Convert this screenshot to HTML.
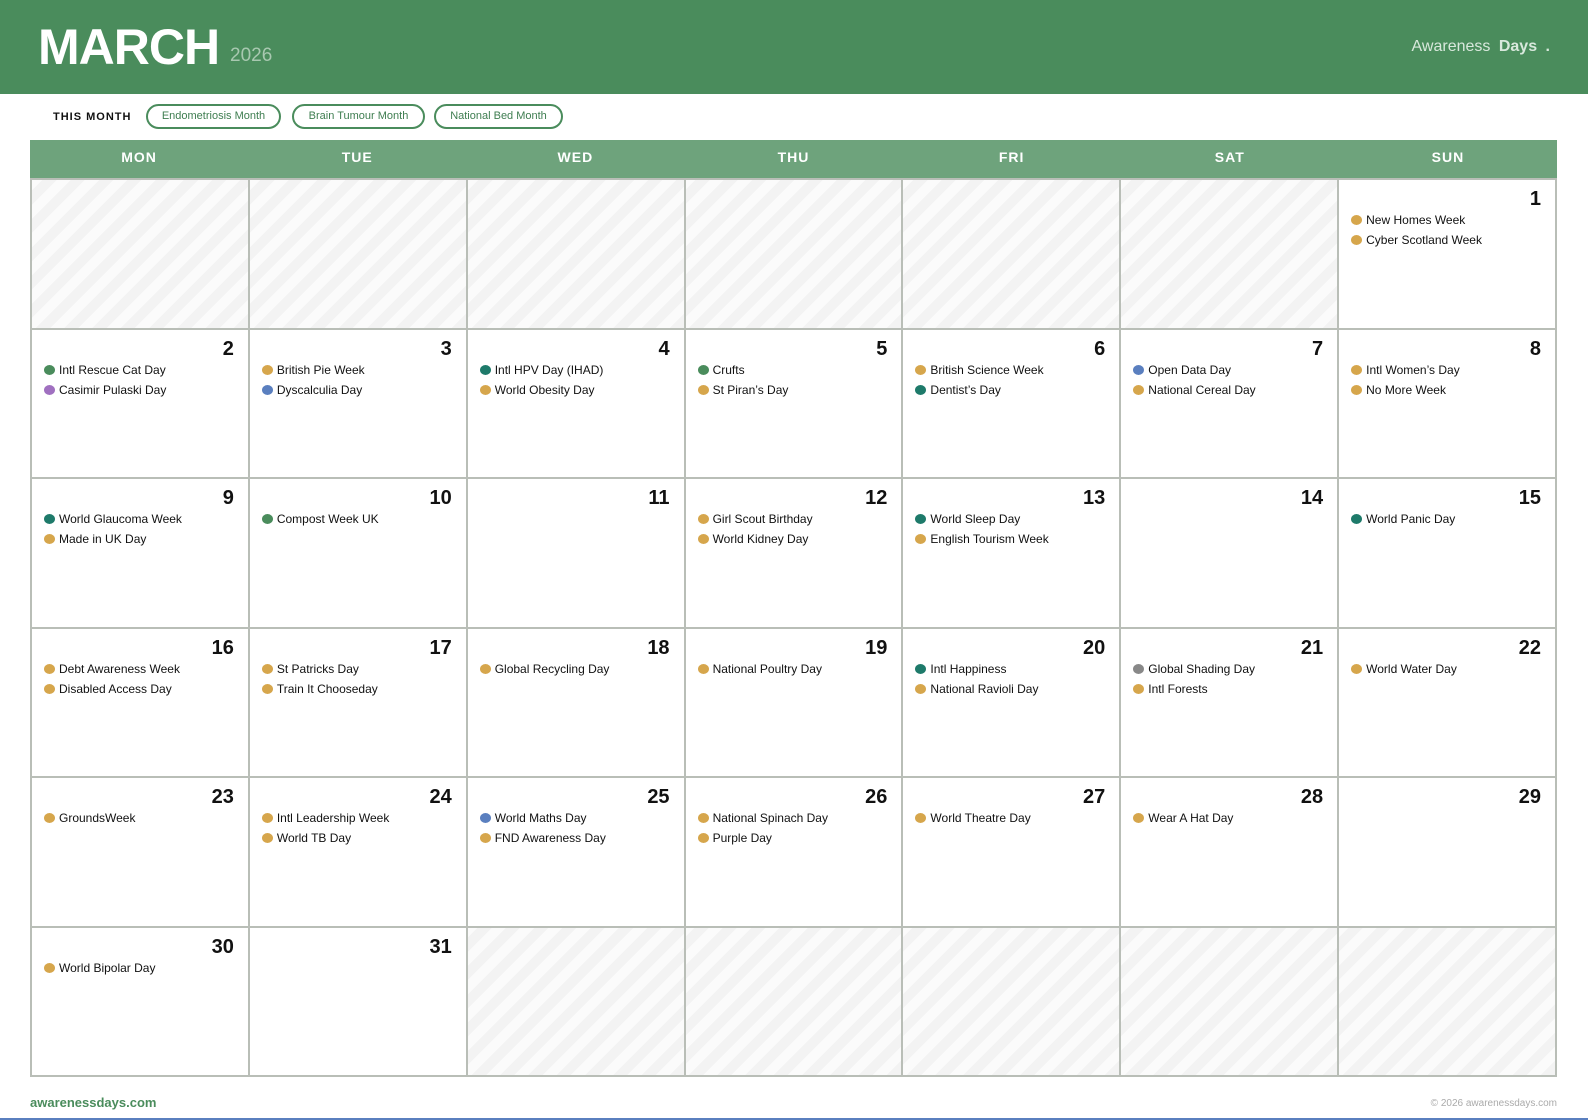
<!DOCTYPE html>
<html><head><meta charset="utf-8"><style>
*{margin:0;padding:0;box-sizing:border-box}
body{width:1588px;height:1120px;background:#fff;font-family:"Liberation Sans",Arial,sans-serif;position:relative;overflow:hidden}
.hdr{position:absolute;left:0;top:0;width:1588px;height:94px;background:#4a8c5c}
.m{position:absolute;left:38px;top:18px;font-size:50px;font-weight:bold;color:#fff;letter-spacing:-1px}
.y{position:absolute;left:230px;top:45px;font-size:19px;color:#a8c8b0}
.brand{position:absolute;right:38px;top:38px;font-size:16px;color:#d8e8dc}
.brand b{margin-left:4px}
.tm{position:absolute;left:53px;top:111px;font-size:11px;font-weight:bold;letter-spacing:1px;color:#111}
.pill{position:absolute;top:104px;height:25px;border:2px solid #4a8c5c;border-radius:13px;font-size:11px;color:#3e7d50;line-height:21px;text-align:center}
.dh{position:absolute;left:30px;top:140px;width:1527px;height:38px;background:#6ea37c;display:flex}
.dh div{flex:1;text-align:center;color:#fff;font-weight:bold;font-size:14px;line-height:34px;letter-spacing:1px}
.g{position:absolute;left:30px;top:178px;width:1527px;height:899px;background:#b9beb7;padding:2px;display:grid;grid-template-columns:repeat(7,1fr);grid-template-rows:repeat(6,1fr);gap:2px}
.c{background:#fff;position:relative}
.e{background:repeating-linear-gradient(-45deg,#f3f3f3 0 10px,#fbfbfb 10px 20px)}
.n{position:absolute;right:14px;top:8px;font-size:20px;font-weight:bold;color:#111}
.ev{position:absolute;left:12px;top:30px;font-size:12px;color:#111;line-height:20px}
.ev div{white-space:nowrap}
.d{display:inline-block;width:11px;height:10px;border-radius:50%;margin-right:4px;vertical-align:-1px}
.gn{background:#4a8c5c}.pu{background:#a070c0}.go{background:#d6a64c}.bl{background:#5a7fbf}.te{background:#1e7a6a}.gr{background:#888}
.f1{position:absolute;left:30px;top:1095px;font-size:13px;font-weight:bold;color:#4a8c5c}
.f2{position:absolute;right:31px;top:1098px;font-size:10px;color:#aaa}
.bar{position:absolute;left:0;top:1118px;width:1588px;height:2px;background:#5a7fbf}
</style></head><body>
<div class="hdr"><div class="m">MARCH</div><div class="y">2026</div><div class="brand">Awareness <b>Days</b> <b>.</b></div></div>
<div class="tm">THIS MONTH</div>
<div class="pill" style="left:146px;width:135px">Endometriosis Month</div>
<div class="pill" style="left:292px;width:133px">Brain Tumour Month</div>
<div class="pill" style="left:434px;width:129px">National Bed Month</div>
<div class="dh"><div>MON</div><div>TUE</div><div>WED</div><div>THU</div><div>FRI</div><div>SAT</div><div>SUN</div></div>
<div class="g">
<div class="c e"></div><div class="c e"></div><div class="c e"></div><div class="c e"></div><div class="c e"></div><div class="c e"></div>
<div class="c"><div class="n">1</div><div class="ev"><div><span class="d go"></span>New Homes Week</div><div><span class="d go"></span>Cyber Scotland Week</div></div></div>
<div class="c"><div class="n">2</div><div class="ev"><div><span class="d gn"></span>Intl Rescue Cat Day</div><div><span class="d pu"></span>Casimir Pulaski Day</div></div></div>
<div class="c"><div class="n">3</div><div class="ev"><div><span class="d go"></span>British Pie Week</div><div><span class="d bl"></span>Dyscalculia Day</div></div></div>
<div class="c"><div class="n">4</div><div class="ev"><div><span class="d te"></span>Intl HPV Day (IHAD)</div><div><span class="d go"></span>World Obesity Day</div></div></div>
<div class="c"><div class="n">5</div><div class="ev"><div><span class="d gn"></span>Crufts</div><div><span class="d go"></span>St Piran’s Day</div></div></div>
<div class="c"><div class="n">6</div><div class="ev"><div><span class="d go"></span>British Science Week</div><div><span class="d te"></span>Dentist’s Day</div></div></div>
<div class="c"><div class="n">7</div><div class="ev"><div><span class="d bl"></span>Open Data Day</div><div><span class="d go"></span>National Cereal Day</div></div></div>
<div class="c"><div class="n">8</div><div class="ev"><div><span class="d go"></span>Intl Women’s Day</div><div><span class="d go"></span>No More Week</div></div></div>
<div class="c"><div class="n">9</div><div class="ev"><div><span class="d te"></span>World Glaucoma Week</div><div><span class="d go"></span>Made in UK Day</div></div></div>
<div class="c"><div class="n">10</div><div class="ev"><div><span class="d gn"></span>Compost Week UK</div></div></div>
<div class="c"><div class="n">11</div></div>
<div class="c"><div class="n">12</div><div class="ev"><div><span class="d go"></span>Girl Scout Birthday</div><div><span class="d go"></span>World Kidney Day</div></div></div>
<div class="c"><div class="n">13</div><div class="ev"><div><span class="d te"></span>World Sleep Day</div><div><span class="d go"></span>English Tourism Week</div></div></div>
<div class="c"><div class="n">14</div></div>
<div class="c"><div class="n">15</div><div class="ev"><div><span class="d te"></span>World Panic Day</div></div></div>
<div class="c"><div class="n">16</div><div class="ev"><div><span class="d go"></span>Debt Awareness Week</div><div><span class="d go"></span>Disabled Access Day</div></div></div>
<div class="c"><div class="n">17</div><div class="ev"><div><span class="d go"></span>St Patricks Day</div><div><span class="d go"></span>Train It Chooseday</div></div></div>
<div class="c"><div class="n">18</div><div class="ev"><div><span class="d go"></span>Global Recycling Day</div></div></div>
<div class="c"><div class="n">19</div><div class="ev"><div><span class="d go"></span>National Poultry Day</div></div></div>
<div class="c"><div class="n">20</div><div class="ev"><div><span class="d te"></span>Intl Happiness</div><div><span class="d go"></span>National Ravioli Day</div></div></div>
<div class="c"><div class="n">21</div><div class="ev"><div><span class="d gr"></span>Global Shading Day</div><div><span class="d go"></span>Intl Forests</div></div></div>
<div class="c"><div class="n">22</div><div class="ev"><div><span class="d go"></span>World Water Day</div></div></div>
<div class="c"><div class="n">23</div><div class="ev"><div><span class="d go"></span>GroundsWeek</div></div></div>
<div class="c"><div class="n">24</div><div class="ev"><div><span class="d go"></span>Intl Leadership Week</div><div><span class="d go"></span>World TB Day</div></div></div>
<div class="c"><div class="n">25</div><div class="ev"><div><span class="d bl"></span>World Maths Day</div><div><span class="d go"></span>FND Awareness Day</div></div></div>
<div class="c"><div class="n">26</div><div class="ev"><div><span class="d go"></span>National Spinach Day</div><div><span class="d go"></span>Purple Day</div></div></div>
<div class="c"><div class="n">27</div><div class="ev"><div><span class="d go"></span>World Theatre Day</div></div></div>
<div class="c"><div class="n">28</div><div class="ev"><div><span class="d go"></span>Wear A Hat Day</div></div></div>
<div class="c"><div class="n">29</div></div>
<div class="c"><div class="n">30</div><div class="ev"><div><span class="d go"></span>World Bipolar Day</div></div></div>
<div class="c"><div class="n">31</div></div>
<div class="c e"></div><div class="c e"></div><div class="c e"></div><div class="c e"></div><div class="c e"></div>
</div>
<div class="f1">awarenessdays.com</div>
<div class="f2">© 2026 awarenessdays.com</div>
<div class="bar"></div>
</body></html>
